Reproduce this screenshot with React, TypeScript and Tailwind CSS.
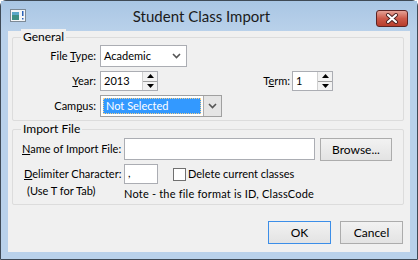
import React from "react";

const font = { fontFamily: "Lato, 'Liberation Sans', sans-serif" };

function Chevron() {
  return (
    <svg width="9" height="6" viewBox="0 0 9 6">
      <path d="M1 1 L4.5 4.5 L8 1" fill="none" stroke="#555" strokeWidth="1.6" />
    </svg>
  );
}

function Spinner({ value, width }: { value: string; width: string }) {
  return (
    <div className={`flex h-[20px] ${width} border border-[#abadb3] bg-white`}>
      <div className="flex-1 pl-[3px] leading-[18px]">{value}</div>
      <div className="flex w-[15px] flex-col border-l border-[#d0d0d0]">
        <div className="flex flex-1 items-center justify-center border-b border-[#a0a0a0] bg-[#f2f2f2]">
          <svg width="7" height="4" viewBox="0 0 7 4">
            <path d="M0 4 L3.5 0 L7 4 Z" fill="#000" />
          </svg>
        </div>
        <div className="flex flex-1 items-center justify-center bg-[#f2f2f2]">
          <svg width="7" height="4" viewBox="0 0 7 4">
            <path d="M0 0 L3.5 4 L7 0 Z" fill="#000" />
          </svg>
        </div>
      </div>
    </div>
  );
}

function Group({ title, className, children }: { title: string; className: string; children: React.ReactNode }) {
  return (
    <div className={`relative ml-[4px] w-[392px] rounded-[2px] border border-[#dcdcdc] ${className}`}>
      <span className="absolute left-[8px] top-[-9px] bg-[#f0f0f0] px-[2px] text-[12px] leading-[16px]">{title}</span>
      {children}
    </div>
  );
}

function Btn({ label, primary }: { label: string; primary?: boolean }) {
  return (
    <div
      className={`flex h-[23px] w-[63px] items-center justify-center border bg-gradient-to-b from-[#f2f2f2] to-[#e3e3e3] text-[12px] ${
        primary ? "border-[#3c8ee8]" : "border-[#acacac]"
      }`}
    >
      {label}
    </div>
  );
}

export default function App() {
  return (
    <div className="h-[260px] w-[418px] overflow-hidden whitespace-nowrap text-[11px] text-black" style={font}>
      <div className="flex h-full flex-col rounded-t-[6px] border border-[#3f4a56] bg-[#b9d1ea]">
        {/* Title bar */}
        <div className="relative flex h-[30px] shrink-0 items-center bg-gradient-to-b from-[#a9c6e4] to-[#b9d1ea]">
          <svg className="ml-[9px]" width="16" height="14" viewBox="0 0 16 14">
            <rect x="0.5" y="0.5" width="15" height="12" fill="#f4f6f8" stroke="#7d8a96" />
            <rect x="2" y="3" width="7" height="8" fill="#3e8f84" />
            <rect x="2" y="3" width="7" height="3" fill="#5aa7c8" />
            <rect x="12" y="2" width="1.5" height="5" fill="#2b62b8" />
            <rect x="12" y="9" width="1.5" height="1.5" fill="#2b62b8" />
          </svg>
          <div className="flex-1 pr-[40px] text-center text-[15px] text-[#1b1b1b]">Student Class Import</div>
          <div className="absolute right-[9px] top-[9px] flex h-[17px] w-[32px] items-center justify-center rounded-[3px] border border-[#5c2323] bg-gradient-to-b from-[#e4a196] via-[#cc5a4a] to-[#b73d2c]">
            <svg width="14" height="11" viewBox="0 0 14 11">
              <path d="M3 2 L11 9 M11 2 L3 9" stroke="#4a2020" strokeWidth="4" strokeLinecap="round" />
              <path d="M3 2 L11 9 M11 2 L3 9" stroke="#fff" strokeWidth="2.2" strokeLinecap="round" />
            </svg>
          </div>
        </div>

        {/* Client area */}
        <div className="mx-[7px] flex h-[221px] shrink-0 flex-col bg-[#f0f0f0]">
          <Group title="General" className="mt-[6px] pb-[3px] pt-[7px]">
            <div className="flex h-[22px] items-center">
              <div className="w-[83px] text-right">
                File <span className="underline">T</span>ype:
              </div>
              <div className="ml-[4px] flex h-[22px] w-[87px] items-center justify-between border border-[#abadb3] bg-white pl-[3px] pr-[5px]">
                <span>Academic</span>
                <Chevron />
              </div>
            </div>
            <div className="mt-[4px] flex h-[20px] items-center">
              <div className="w-[83px] text-right">
                <span className="underline">Y</span>ear:
              </div>
              <div className="ml-[4px]">
                <Spinner value="2013" width="w-[58px]" />
              </div>
              <div className="w-[132px] text-right">
                T<span className="underline">e</span>rm:
              </div>
              <div className="ml-[2px]">
                <Spinner value="1" width="w-[41px]" />
              </div>
            </div>
            <div className="mt-[4px] flex h-[22px] items-center">
              <div className="w-[83px] text-right">
                Cam<span className="underline">p</span>us:
              </div>
              <div className="ml-[4px] flex h-[22px] w-[122px] border border-[#a0a0a0] bg-white">
                <div className="m-[2px] flex flex-1 items-center border border-dotted border-[#f5d08a] bg-[#3399ff] pl-[2px] text-white">
                  Not Selected
                </div>
                <div className="flex w-[18px] items-center justify-center border-l border-[#acacac] bg-[#e5e5e5]">
                  <Chevron />
                </div>
              </div>
            </div>
          </Group>

          <Group title="Import File" className="mt-[8px] h-[76px] pt-[8px]">
            <div className="flex items-start">
              <div className="w-[111px] pl-[9px] leading-[22px]">
                <span className="underline">N</span>ame of Import File:
              </div>
              <div className="h-[22px] w-[191px] border border-[#abadb3] bg-white" />
              <div className="ml-[5px]">
                <div className="flex h-[23px] w-[72px] items-center justify-center border border-[#acacac] bg-gradient-to-b from-[#f2f2f2] to-[#e3e3e3] text-[12px]">
                  Browse...
                </div>
              </div>
            </div>
            <div className="mt-[3px] flex items-start">
              <div className="w-[111px] pl-[11px]">
                <div className="leading-[20px]">
                  <span className="underline">D</span>elimiter Character:
                </div>
                <div className="pl-[3px] leading-[13px]">(Use T for Tab)</div>
              </div>
              <div>
                <div className="flex items-center">
                  <div className="h-[20px] w-[34px] border border-[#abadb3] bg-white pl-[3px] leading-[16px]">,</div>
                  <div className="ml-[15px] h-[13px] w-[13px] border border-[#707070] bg-white" />
                  <span className="ml-[2px]">Delete current classes</span>
                </div>
                <div className="mt-[2px] leading-[16px] tracking-[0.2px]">Note - the file format is ID, ClassCode</div>
              </div>
            </div>
          </Group>

          <div className="mr-[7px] mt-[16px] flex justify-end gap-[9px]">
            <Btn label="OK" primary />
            <Btn label="Cancel" />
          </div>
        </div>
        <div className="flex-1" />
      </div>
    </div>
  );
}
